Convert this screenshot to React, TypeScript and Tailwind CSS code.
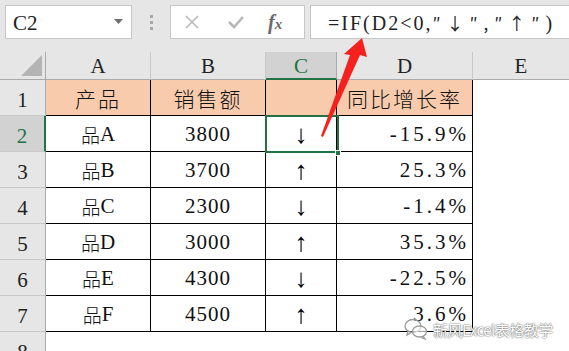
import React from 'react';

const serif = { fontFamily: '"Liberation Serif", "Noto Sans CJK SC", serif' };
const cjk = { fontFamily: '"Noto Sans CJK SC", sans-serif' };
const arrowFont = { fontFamily: '"Liberation Serif", "DejaVu Serif", serif' };

const rows = [
  { name: '品A', sales: '3800', arrow: '↓', rate: '-15.9%' },
  { name: '品B', sales: '3700', arrow: '↑', rate: '25.3%' },
  { name: '品C', sales: '2300', arrow: '↓', rate: '-1.4%' },
  { name: '品D', sales: '3000', arrow: '↑', rate: '35.3%' },
  { name: '品E', sales: '4300', arrow: '↓', rate: '-22.5%' },
  { name: '品F', sales: '4500', arrow: '↑', rate: '3.6%' },
];

function RowHeader({ n, active }: { n: number; active?: boolean }) {
  return (
    <div
      className={`w-[46px] shrink-0 h-full flex items-center justify-center border-b border-[#c8c8c8] text-[21px] pt-[6px] ${
        active ? 'bg-[#d2d2d2] text-[#217346] border-r-2 border-r-[#217346]' : 'bg-[#e6e6e6] text-[#222] border-r border-r-[#ababab]'
      }`}
    >
      {n}
    </div>
  );
}

function Cell({ w, children, align = 'center', bg = 'bg-white' }: { w: string; children?: React.ReactNode; align?: 'center' | 'right'; bg?: string }) {
  return (
    <div
      className={`${w} shrink-0 h-full flex items-center border-r border-b border-black text-[21px] text-[#111] pt-[3px] ${bg} ${
        align === 'right' ? 'justify-end pr-[3px]' : 'justify-center'
      }`}
    >
      {children}
    </div>
  );
}

export default function App() {
  return (
    <div className="w-[569px] h-[351px] overflow-hidden bg-[#e6e6e6] relative" style={serif}>
      {/* formula bar */}
      <div className="flex items-start pl-[5px] pt-[5px] h-[52px]">
        <div className="w-[127px] h-[34px] bg-white border border-[#c6c6c6] flex items-center justify-between pl-[7px] pr-[8px]">
          <span className="text-[21px] text-[#222] leading-none pt-[3px]">C2</span>
          <svg width="9" height="6" viewBox="0 0 9 6"><path d="M0 0h9L4.5 5z" fill="#6e6e6e" /></svg>
        </div>
        <div className="w-[38px] h-[34px] flex flex-col items-center justify-center gap-[3px]">
          <span className="w-[3px] h-[3px] bg-[#a8a8a8]" />
          <span className="w-[3px] h-[3px] bg-[#a8a8a8]" />
          <span className="w-[3px] h-[3px] bg-[#a8a8a8]" />
        </div>
        <div className="w-[135px] h-[34px] bg-white border border-[#c6c6c6] flex items-center">
          <svg className="ml-[13px]" width="16" height="16" viewBox="0 0 16 16">
            <path d="M2 2l12 12M14 2L2 14" stroke="#b8b8b8" strokeWidth="1.6" />
          </svg>
          <svg className="ml-[27px]" width="18" height="16" viewBox="0 0 18 16">
            <path d="M2 8l5 5L16 3" stroke="#b8b8b8" strokeWidth="2.6" fill="none" />
          </svg>
          <span className="ml-[23px] text-[20px] italic text-[#6a6a6a] font-bold">
            f<span className="text-[15px]">x</span>
          </span>
        </div>
        <div className="ml-[5px] flex-1 h-[34px] bg-white border border-r-0 border-[#c6c6c6] flex items-center pl-[17px]">
          <span className="text-[20px] text-[#222] tracking-[2px] pt-[2px] whitespace-nowrap">
            =IF(D2&lt;0,<span className="text-[17px] tracking-[6px]" style={cjk}>″↓″,″↑″</span>)
          </span>
        </div>
      </div>

      {/* grid */}
      <div className="relative">
        <div className="flex h-[28px] text-[21px] text-[#222]">
          <div className="w-[46px] shrink-0 h-full border-r border-b border-[#ababab] flex items-end justify-end pr-[3px] pb-[3px]">
            <svg width="21" height="21" viewBox="0 0 21 21"><path d="M21 0v21H0z" fill="#b4b4b4" /></svg>
          </div>
          <div className="w-[105px] shrink-0 h-full border-r border-b border-r-[#c8c8c8] border-b-[#ababab] flex items-center justify-center pt-[2px]">A</div>
          <div className="w-[115px] shrink-0 h-full border-r border-b border-r-[#c8c8c8] border-b-[#ababab] flex items-center justify-center pt-[2px]">B</div>
          <div className="w-[71px] shrink-0 h-full bg-[#d2d2d2] border-r border-r-[#ababab] border-b-2 border-b-[#217346] flex items-center justify-center text-[#217346] pt-[3px]">C</div>
          <div className="w-[136px] shrink-0 h-full border-r border-b border-r-[#c8c8c8] border-b-[#ababab] flex items-center justify-center pt-[2px]">D</div>
          <div className="flex-1 h-full border-b border-[#ababab] flex items-center justify-center pt-[2px]">E</div>
        </div>

        <div className="flex h-[36px]">
          <RowHeader n={1} />
          <Cell w="w-[105px]" bg="bg-[#f8cbad]"><span className="tracking-[2px] font-light" style={cjk}>产品</span></Cell>
          <Cell w="w-[115px]" bg="bg-[#f8cbad]"><span className="tracking-[2px] font-light" style={cjk}>销售额</span></Cell>
          <Cell w="w-[71px]" bg="bg-[#f8cbad]" />
          <Cell w="w-[136px]" bg="bg-[#f8cbad]"><span className="tracking-[2px] font-light" style={cjk}>同比增长率</span></Cell>
          <div className="flex-1 bg-white" />
        </div>

        {rows.map((r, i) => (
          <div key={r.name} className="flex h-[36px]">
            <RowHeader n={i + 2} active={i === 0} />
            <Cell w="w-[105px]">
              <span className="font-light text-[19px]" style={cjk}>{r.name.slice(0, 1)}</span>
              <span>{r.name.slice(1)}</span>
            </Cell>
            <Cell w="w-[115px]"><span className="tracking-[1px]">{r.sales}</span></Cell>
            <Cell w="w-[71px]"><span className="text-[26px] leading-none text-black" style={arrowFont}>{r.arrow}</span></Cell>
            <Cell w="w-[136px]" align="right"><span className="tracking-[3px]">{r.rate}</span></Cell>
            <div className="flex-1 bg-white" />
          </div>
        ))}

        <div className="flex h-[36px]">
          <RowHeader n={8} />
          <div className="flex-1 bg-white" />
        </div>

        {/* selected cell C2 */}
        <div className="absolute left-[265px] top-[63px] w-[74px] h-[38px] border-2 border-[#217346]" />
        <div className="absolute left-[335px] top-[98px] w-[6px] h-[6px] bg-[#217346] border border-white" />
      </div>

      {/* red arrow */}
      <svg className="absolute left-0 top-0" width="569" height="351" viewBox="0 0 569 351">
        <polygon points="362,38 367,57 360,55 323,137 321,136 350,55 344,54" fill="#f5211f" />
      </svg>

      {/* watermark */}
      <div className="absolute left-[404px] top-[318px] flex items-center gap-[5px] whitespace-nowrap">
        <svg width="24" height="22" viewBox="0 0 24 22" fill="none" stroke="#9a9a9a" strokeWidth="1.3">
          <ellipse cx="9" cy="8" rx="8" ry="6.5" />
          <ellipse cx="15.5" cy="13.5" rx="7" ry="5.5" fill="rgba(255,255,255,0.6)" />
          <path d="M4 13l-1 4 4-2.5M19 18l2 3-4-1.5" />
        </svg>
        <span
          className="text-[15px] text-white leading-none tracking-[-0.5px] [text-shadow:0_0_2px_rgba(0,0,0,0.6),0_0_1px_rgba(0,0,0,0.5)]"
          style={cjk}
        >
          新风Excel表格教学
        </span>
      </div>
    </div>
  );
}
